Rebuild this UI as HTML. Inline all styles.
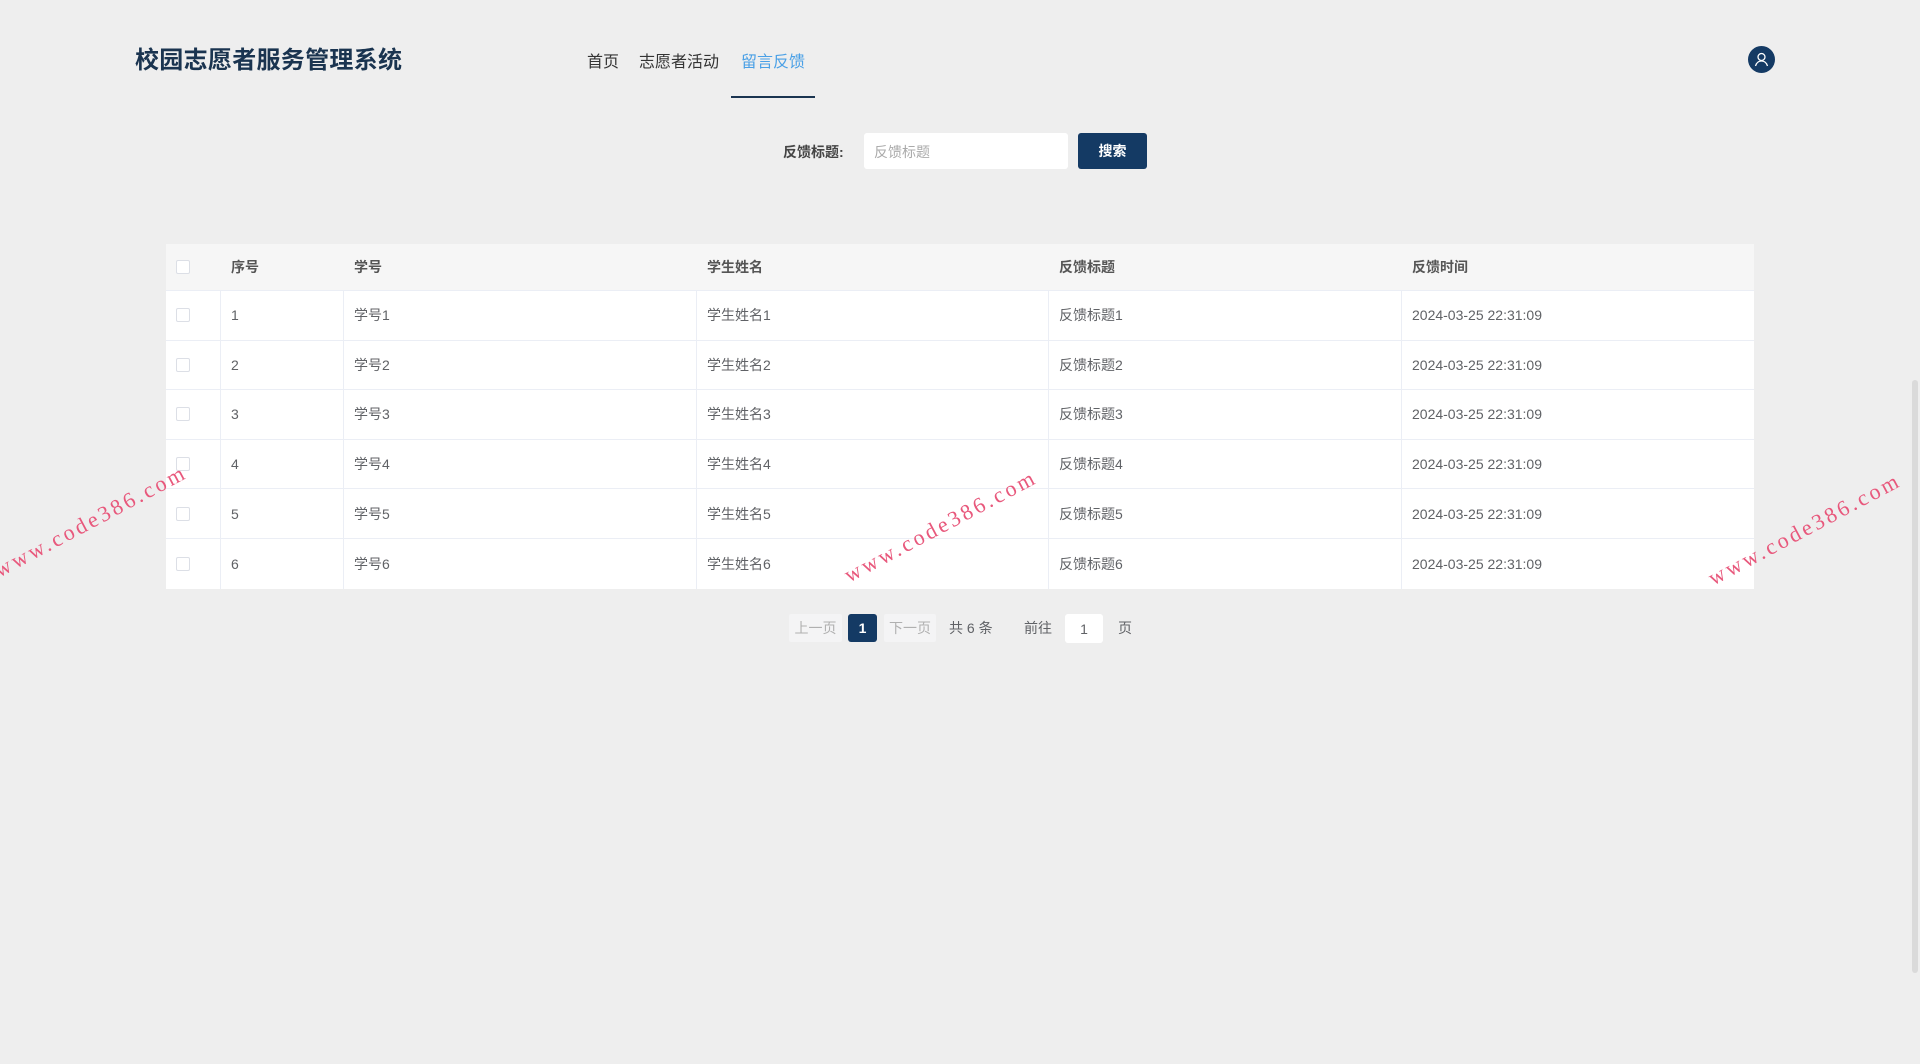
<!DOCTYPE html>
<html><head><meta charset="utf-8"><style>
*{margin:0;padding:0;box-sizing:border-box}
body{width:1920px;height:1064px;background:#eeeeee;font-family:"Liberation Sans","Noto Sans CJK SC",sans-serif;position:relative;overflow:hidden;color:#606266}
.a{position:absolute}
.title{left:135px;top:40px;font-size:24px;font-weight:bold;color:#1a3450;letter-spacing:0.3px}
.nav{top:48px;font-size:16px;color:#333}
.tbl{left:166px;top:244px;width:1588px;background:#fff}
.row{position:relative;height:49.6px;border-bottom:1px solid #ebeef5;font-size:14px}
.row.h{background:#f6f6f6;font-weight:bold;color:#555;height:47px}
.row span{position:absolute;top:50%;transform:translateY(-50%)}
.cb{width:14px;height:14px;border:1px solid #dcdfe6;border-radius:2px;background:#fff;left:10px}
.vl{position:absolute;top:0;bottom:0;width:1px;background:#ebeef5}
.wm{font-family:"Liberation Serif",serif;font-size:22px;color:#e8587c;transform:rotate(-28deg);transform-origin:left bottom;letter-spacing:3px;white-space:nowrap}
.pg{font-size:14px;top:614px;height:28px;line-height:28px}
</style></head><body>
<div class="a title">校园志愿者服务管理系统</div>
<div class="a nav" style="left:587px">首页</div>
<div class="a nav" style="left:639px">志愿者活动</div>
<div class="a nav" style="left:741px;color:#4aa0e6">留言反馈</div>
<div class="a" style="left:731px;top:96px;width:84px;height:2px;background:#1a3450"></div>
<div class="a" style="left:1748px;top:46px;width:27px;height:27px;border-radius:50%;background:#143a64">
<svg width="27" height="27" viewBox="0 0 27 27"><circle cx="13.5" cy="11" r="3.5" fill="none" stroke="#fff" stroke-width="1.3"/><path d="M7.5 20c1-3.5 3.5-5 6-5s5 1.5 6 5" fill="none" stroke="#fff" stroke-width="1.3"/></svg></div>
<div class="a" style="left:783px;top:142px;font-size:14px;font-weight:bold;color:#444">反馈标题:</div>
<div class="a" style="left:864px;top:133px;width:204px;height:36px;background:#fff;border-radius:3px;font-size:14px;color:#aaa;padding:9px 10px">反馈标题</div>
<div class="a" style="left:1078px;top:133px;width:69px;height:36px;background:#143a64;border-radius:3px;color:#fff;font-size:14px;font-weight:bold;text-align:center;line-height:36px">搜索</div>
<div class="a tbl">
<div class="vl" style="left:54px"></div><div class="vl" style="left:177px"></div><div class="vl" style="left:530px"></div><div class="vl" style="left:882px"></div><div class="vl" style="left:1235px"></div>
<div class="row h"><span class="cb"></span><span style="left:65px">序号</span><span style="left:188px">学号</span><span style="left:541px">学生姓名</span><span style="left:893px">反馈标题</span><span style="left:1246px">反馈时间</span></div>
<div class="row"><span class="cb"></span><span style="left:65px">1</span><span style="left:188px">学号1</span><span style="left:541px">学生姓名1</span><span style="left:893px">反馈标题1</span><span style="left:1246px">2024-03-25 22:31:09</span></div>
<div class="row"><span class="cb"></span><span style="left:65px">2</span><span style="left:188px">学号2</span><span style="left:541px">学生姓名2</span><span style="left:893px">反馈标题2</span><span style="left:1246px">2024-03-25 22:31:09</span></div>
<div class="row"><span class="cb"></span><span style="left:65px">3</span><span style="left:188px">学号3</span><span style="left:541px">学生姓名3</span><span style="left:893px">反馈标题3</span><span style="left:1246px">2024-03-25 22:31:09</span></div>
<div class="row"><span class="cb"></span><span style="left:65px">4</span><span style="left:188px">学号4</span><span style="left:541px">学生姓名4</span><span style="left:893px">反馈标题4</span><span style="left:1246px">2024-03-25 22:31:09</span></div>
<div class="row"><span class="cb"></span><span style="left:65px">5</span><span style="left:188px">学号5</span><span style="left:541px">学生姓名5</span><span style="left:893px">反馈标题5</span><span style="left:1246px">2024-03-25 22:31:09</span></div>
<div class="row" style="border-bottom:none"><span class="cb"></span><span style="left:65px">6</span><span style="left:188px">学号6</span><span style="left:541px">学生姓名6</span><span style="left:893px">反馈标题6</span><span style="left:1246px">2024-03-25 22:31:09</span></div>
</div>
<div class="a pg" style="left:789px;width:53px;background:#f4f4f5;color:#b0b0b0;text-align:center;border-radius:2px">上一页</div>
<div class="a pg" style="left:848px;width:29px;background:#143a64;color:#fff;text-align:center;font-weight:bold;border-radius:3px">1</div>
<div class="a pg" style="left:884px;width:52px;background:#f4f4f5;color:#b0b0b0;text-align:center;border-radius:2px">下一页</div>
<div class="a pg" style="left:949px">共 6 条</div>
<div class="a pg" style="left:1024px">前往</div>
<div class="a pg" style="left:1065px;width:38px;background:#fff;text-align:center;border-radius:3px;top:614px;height:29px;line-height:31px">1</div>
<div class="a pg" style="left:1118px">页</div>
<div class="a wm" style="left:2px;top:557px">www.code386.com</div>
<div class="a wm" style="left:852px;top:562px">www.code386.com</div>
<div class="a wm" style="left:1716px;top:565px">www.code386.com</div>
<div class="a" style="left:1912px;top:380px;width:6px;height:593px;background:#dadada;border-radius:3px"></div>
</body></html>
